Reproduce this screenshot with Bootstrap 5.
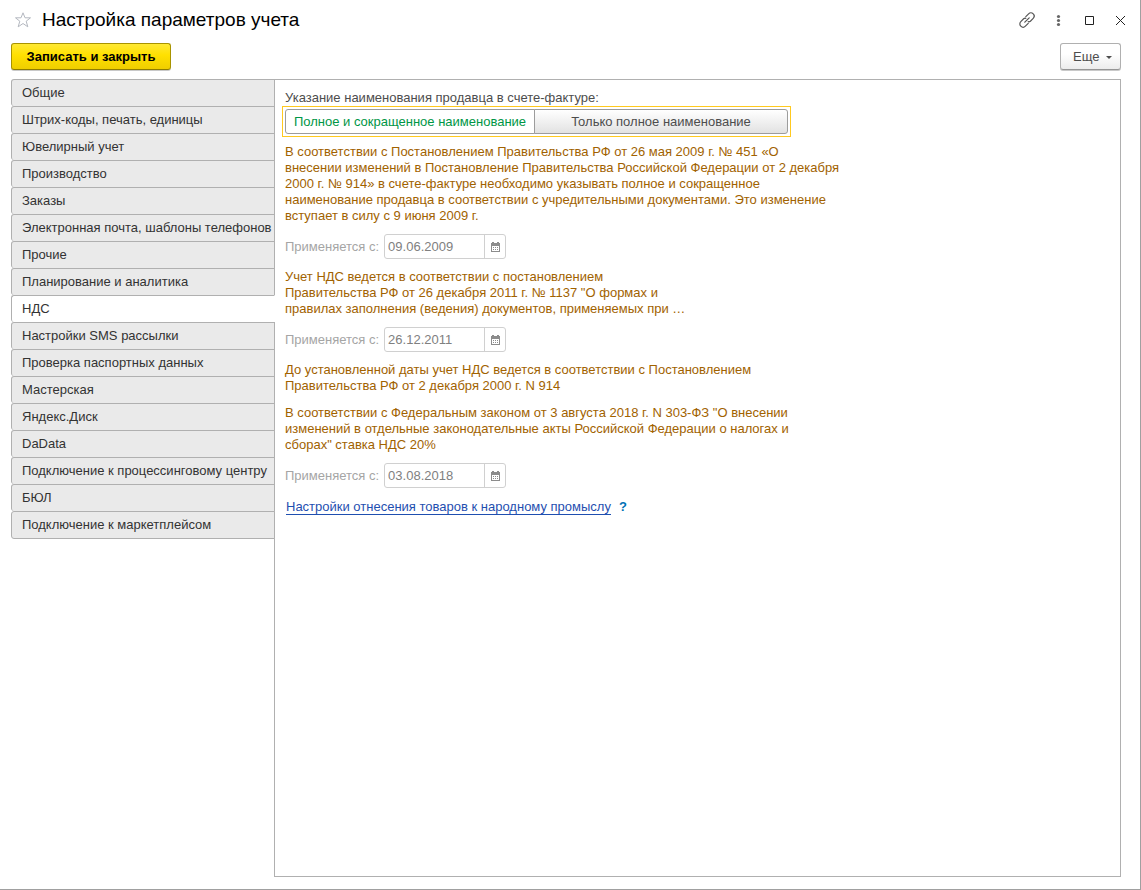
<!DOCTYPE html>
<html lang="ru">
<head>
<meta charset="utf-8">
<meta name="viewport" content="width=device-width, initial-scale=1">
<title>Настройка параметров учета</title>
<link href="https://cdn.jsdelivr.net/npm/bootstrap@5.3.0/dist/css/bootstrap.min.css" rel="stylesheet">
<style>
  body { font-family: "Liberation Sans", Arial, sans-serif; font-size: 13px; line-height: 16px; color: #4d4d4d; background: #fff; }
  .app-window { border-right: 1px solid #a0a0a0; border-bottom: 1px solid #a0a0a0; padding: 0 19px 12px 11px; }
  .title-bar { height: 40px; }
  .title-bar h1 { font-size: 19px; line-height: 24px; color: #000; }
  .tool-btn { border: 0; background: none; padding: 0; width: 16px; height: 16px; display: flex; color: #333; }
  .tool-btn.favorite { width: 23px; padding-left: 4px; }
  .window-tools { gap: 15px; margin-right: -7px; }
  .command-bar { padding: 3px 0 9px; }
  .command-btn { font-size: 13px; line-height: 16px; height: 27px; padding: 4px 12px; border-radius: 3px; }
  .btn-save { width: 160px; color: #000; font-weight: bold; background: linear-gradient(#ffe934, #ffe000 45%, #efce00); border: 1px solid #a89300; border-bottom-color: #8f7d00; box-shadow: 0 1px 0 #c9c9c9; }
  .btn-save:hover { color: #000; background: #ffe000; border-color: #a89300; }
  .btn-more { width: 61px; color: #4d4d4d; background: linear-gradient(#fff 40%, #ececec); border: 1px solid #b0b0b0; border-bottom-color: #959595; box-shadow: 0 1px 0 #c9c9c9; }
  .btn-more.dropdown-toggle::after { border-width: 3px 3px 0; margin-left: 7px; vertical-align: 2px; }
  .section-tabs { width: 264px; margin-right: -1px; z-index: 1; }
  .section-tabs .nav-link { height: 27px; padding: 4px 0 5px 10px; text-align: left; white-space: nowrap; color: #333; background: #eaeaea; border: 1px solid #b0b0b0; border-bottom-width: 0; border-radius: 3px 0 0 3px; }
  .section-tabs .nav-link.active { color: #333; background: #fff; border-right-color: #fff; }
  .section-tabs .nav-link:last-child { height: 28px; border-bottom-width: 1px; }
  .section-page { border: 1px solid #b0b0b0; padding: 10px; }
  .switch-frame { width: 509px; margin: 0 0 7px -3px; padding: 2px; border: 1px solid #ffc91f; }
  .switch-frame .btn { font-size: 13px; line-height: 16px; height: 25px; padding: 4px 0; color: #4d4d4d; border: 1px solid #9c9c9c; border-radius: 3px; background: linear-gradient(#fff, #e2e2e2); }
  .switch-frame .btn-group .btn { flex: 1 1 0; }
  .switch-frame .btn-group .btn:first-of-type { flex: 0 0 250px; }
  .switch-frame .btn-check:checked + .btn { color: #009646; background: #fff; border-color: #9c9c9c; }
  .page-fields { gap: 10px; }
  .note { color: #a16200; white-space: nowrap; }
  .note + .note { padding-top: 1px; }
  .date-row { gap: 5px; color: #a5a5a5; }
  .date-box { width: 122px; height: 25px; border: 1px solid #d0d0d0; border-radius: 3px; }
  .date-box input { width: 99px; min-width: 0; border: 0; padding: 0 3px; color: #808080; background: none; line-height: 16px; }
  .date-box button { width: 21px; display: flex; align-items: center; justify-content: center; border: 0; border-left: 1px solid #d0d0d0; padding: 0; background: none; color: #8c8c8c; }
  .craft-row { padding-top: 1px; }
  .craft-link { color: #1f4fb0; border-bottom: 1px solid #1f4fb0; text-decoration: none; line-height: 14px; margin: 1px 0 0 1px; }
  .help-btn { border: 0; padding: 0; background: none; color: #0071b5; font-weight: bold; }
</style>
</head>
<body>
<div class="app-window d-flex flex-column min-vh-100">
  <header class="title-bar d-flex align-items-center">
    <button class="tool-btn favorite me-2" aria-label="В избранное">
      <svg width="17" height="16" viewBox="0 0 17 16" fill="none" stroke="#b4b8c0"><path d="M8 .8 10 5.800H15.500L11.200 9.200 12.800 14.800 8 11.500 3.200 14.800 4.800 9.200.5 5.800H6Z"/></svg>
    </button>
    <h1 class="m-0 fw-normal">Настройка параметров учета</h1>
    <div class="window-tools d-flex ms-auto">
      <button class="tool-btn" aria-label="Получить ссылку"><svg width="16" height="16" viewBox="0 0 16 16" fill="none" stroke="#555" stroke-width="1.200" stroke-linecap="round"><path d="M5.800 10.200 10.200 5.800M6.800 4.600 9.600 1.800A2.900 2.900 0 0 1 14.200 6.400L11.400 9.200Q10.400 10 9.200 9.700M9.200 11.400 6.400 14.200A2.900 2.900 0 0 1 1.800 9.600L4.600 6.800Q5.600 6 6.800 6.300"/></svg></button>
      <button class="tool-btn" aria-label="Меню"><svg width="16" height="16" viewBox="0 0 16 16" fill="#666"><circle cx="8.500" cy="4.500" r="1.600"/><circle cx="8.500" cy="8.500" r="1.600"/><circle cx="8.500" cy="12.500" r="1.600"/></svg></button>
      <button class="tool-btn" aria-label="Развернуть"><svg width="16" height="16" viewBox="0 0 16 16" fill="none" stroke="#222" stroke-width="1"><path d="M4.500 4.500h8v8h-8z"/></svg></button>
      <button class="tool-btn" aria-label="Закрыть"><svg width="16" height="16" viewBox="0 0 16 16" fill="none" stroke="#222"><path d="M4 4 13 13M13 4 4 13"/></svg></button>
    </div>
  </header>
  <div class="command-bar d-flex justify-content-between">
    <button class="btn command-btn btn-save">Записать и закрыть</button>
    <button class="btn command-btn btn-more dropdown-toggle">Еще</button>
  </div>
  <main class="d-flex flex-grow-1">
    <nav class="section-tabs nav flex-column flex-shrink-0 flex-nowrap" aria-label="Разделы">
      <button class="nav-link">Общие</button>
      <button class="nav-link">Штрих-коды, печать, единицы</button>
      <button class="nav-link">Ювелирный учет</button>
      <button class="nav-link">Производство</button>
      <button class="nav-link">Заказы</button>
      <button class="nav-link">Электронная почта, шаблоны телефонов</button>
      <button class="nav-link">Прочие</button>
      <button class="nav-link">Планирование и аналитика</button>
      <button class="nav-link active" aria-current="page">НДС</button>
      <button class="nav-link">Настройки SMS рассылки</button>
      <button class="nav-link">Проверка паспортных данных</button>
      <button class="nav-link">Мастерская</button>
      <button class="nav-link">Яндекс.Диск</button>
      <button class="nav-link">DaData</button>
      <button class="nav-link">Подключение к процессинговому центру</button>
      <button class="nav-link">БЮЛ</button>
      <button class="nav-link">Подключение к маркетплейсом</button>
    </nav>
    <section class="section-page flex-grow-1">
      <div id="seller-label">Указание наименования продавца в счете-фактуре:</div>
      <div class="switch-frame">
        <div class="btn-group d-flex" role="group" aria-labelledby="seller-label">
          <input type="radio" class="btn-check" name="seller" id="seller-both" checked>
          <label class="btn" for="seller-both">Полное и сокращенное наименование</label>
          <input type="radio" class="btn-check" name="seller" id="seller-full">
          <label class="btn" for="seller-full">Только полное наименование</label>
        </div>
      </div>
      <div class="page-fields d-grid justify-content-start">
        <p class="note m-0">В соответствии с Постановлением Правительства РФ от 26 мая 2009 г. № 451 «О<br>внесении изменений в Постановление Правительства Российской Федерации от 2 декабря<br>2000 г. № 914» в счете-фактуре необходимо указывать полное и сокращенное<br>наименование продавца в соответствии с учредительными документами. Это изменение<br>вступает в силу с 9 июня 2009 г.</p>
        <div class="date-row d-flex align-items-center">
          <label for="date-1">Применяется с:</label>
          <div class="date-box d-flex"><input type="text" id="date-1" value="09.06.2009" readonly><button aria-label="Выбрать дату"><svg width="9" height="10" viewBox="0 0 9 10" fill="currentColor"><path d="M1 0h2v1h3V0h2v1h1v9H0V1h1zM1 4v5h7V4z" fill-rule="evenodd"/><path d="M2 5h1v1H2zM4 5h1v1H4zM6 5h1v1H6zM2 7h1v1H2zM4 7h1v1H4zM6 7h1v1H6z"/></svg></button></div>
        </div>
        <p class="note m-0">Учет НДС ведется в соответствии с постановлением<br>Правительства РФ от 26 декабря 2011 г. № 1137 "О формах и<br>правилах заполнения (ведения) документов, применяемых при …</p>
        <div class="date-row d-flex align-items-center">
          <label for="date-2">Применяется с:</label>
          <div class="date-box d-flex"><input type="text" id="date-2" value="26.12.2011" readonly><button aria-label="Выбрать дату"><svg width="9" height="10" viewBox="0 0 9 10" fill="currentColor"><path d="M1 0h2v1h3V0h2v1h1v9H0V1h1zM1 4v5h7V4z" fill-rule="evenodd"/><path d="M2 5h1v1H2zM4 5h1v1H4zM6 5h1v1H6zM2 7h1v1H2zM4 7h1v1H4zM6 7h1v1H6z"/></svg></button></div>
        </div>
        <p class="note m-0">До установленной даты учет НДС ведется в соответствии с Постановлением<br>Правительства РФ от 2 декабря 2000 г. N 914</p>
        <p class="note m-0">В соответствии с Федеральным законом от 3 августа 2018 г. N 303-ФЗ "О внесении<br>изменений в отдельные законодательные акты Российской Федерации о налогах и<br>сборах" ставка НДС 20%</p>
        <div class="date-row d-flex align-items-center">
          <label for="date-3">Применяется с:</label>
          <div class="date-box d-flex"><input type="text" id="date-3" value="03.08.2018" readonly><button aria-label="Выбрать дату"><svg width="9" height="10" viewBox="0 0 9 10" fill="currentColor"><path d="M1 0h2v1h3V0h2v1h1v9H0V1h1zM1 4v5h7V4z" fill-rule="evenodd"/><path d="M2 5h1v1H2zM4 5h1v1H4zM6 5h1v1H6zM2 7h1v1H2zM4 7h1v1H4zM6 7h1v1H6z"/></svg></button></div>
        </div>
        <div class="craft-row d-flex align-items-start gap-2">
          <a class="craft-link" href="#">Настройки отнесения товаров к народному промыслу</a>
          <button class="help-btn" aria-label="Справка">?</button>
        </div>
      </div>
    </section>
  </main>
</div>
<script src="https://cdn.jsdelivr.net/npm/bootstrap@5.3.0/dist/js/bootstrap.bundle.min.js"></script>
</body>
</html>
